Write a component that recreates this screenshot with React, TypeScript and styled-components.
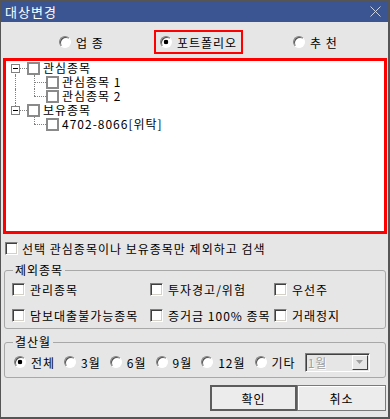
import React from 'react'
import styled, { createGlobalStyle } from 'styled-components'

const GlobalStyle = createGlobalStyle`
  html, body { margin: 0; padding: 0; background: #e6e6e6; }
  body {
    font-family: "Noto Sans CJK KR", "Liberation Sans", sans-serif;
    font-size: 12px;
    letter-spacing: 1px;
    color: #000;
  }
  * { box-sizing: border-box; }
`

const Window = styled.div`
  width: 390px;
  height: 419px;
  display: flex;
  flex-direction: column;
  background: #e6e6e6;
  border-style: solid;
  border-color: #555;
  border-width: 1px 2px 2px 1px;
`

const TitleBar = styled.div`
  height: 21px;
  display: flex;
  align-items: center;
  justify-content: space-between;
  padding: 0 7px 0 4px;
  background: #3b5593;
  color: #fff;
  font-size: 13px;
`

const Body = styled.div`
  display: flex;
  flex-direction: column;
  padding: 0 2px 0 3px;
`

const ModeRow = styled.div`
  height: 36px;
  padding: 4px 0 0 19px;
  display: grid;
  grid-template-columns: repeat(3, 117px);
  align-items: center;
  justify-items: center;
`

const ModeOption = styled.label<{ $highlight?: boolean }>`
  height: 24px;
  display: flex;
  align-items: center;
  gap: 5px;
  padding: 0 4px 0 4px;
  border: 2px solid ${p => (p.$highlight ? '#ff0000' : 'transparent')};
  white-space: pre;
`

const Radio = styled.span<{ $checked?: boolean }>`
  width: 12px;
  height: 12px;
  flex: none;
  border-radius: 50%;
  border: 1px solid;
  border-color: #808080 #fff #fff #808080;
  box-shadow: inset 1px 1px 0 #505050;
  background: ${p =>
    p.$checked ? 'radial-gradient(circle, #000 0 2px, #fff 2.6px)' : '#fff'};
`

const TreeBox = styled.div`
  margin: 0 -1px;
  height: 176px;
  border: 3px solid #ff0000;
  background: #fff;
  padding-top: 0;
`

const TreeRow = styled.div`
  height: 14px;
  display: flex;
  align-items: center;
`

const Branch = styled.span<{ $up?: boolean; $down?: boolean; $right?: boolean }>`
  position: relative;
  width: 19px;
  height: 14px;
  flex: none;
  display: flex;
  align-items: center;
  justify-content: center;
  &::before {
    content: '';
    display: ${p => (p.$up || p.$down ? 'block' : 'none')};
    position: absolute;
    left: 9px;
    top: ${p => (p.$up ? '0' : '7px')};
    bottom: ${p => (p.$down ? '0' : '7px')};
    border-left: 1px dotted #808080;
  }
  &::after {
    content: '';
    display: ${p => (p.$right ? 'block' : 'none')};
    position: absolute;
    left: 9px;
    right: -2px;
    top: 7px;
    border-top: 1px dotted #808080;
  }
`

const Expander = styled.span`
  position: relative;
  z-index: 1;
  width: 9px;
  height: 9px;
  margin-right: 1px;
  border: 1px solid #808080;
  background: #fff;
  display: flex;
  align-items: center;
  justify-content: center;
  &::before {
    content: '';
    width: 5px;
    height: 1px;
    background: #000;
  }
`

const TreeCheck = styled.span`
  width: 13px;
  height: 13px;
  flex: none;
  margin-left: 2px;
  border: 2px solid #8a8a8a;
  background: #fff;
`

const TreeLabel = styled.span`
  margin-left: 3px;
  height: 14px;
  line-height: 14px;
  white-space: nowrap;
`

const CheckBox = styled.span`
  width: 13px;
  height: 13px;
  flex: none;
  background: #fff;
  border: 1px solid;
  border-color: #808080 #fff #fff #808080;
  box-shadow: inset 1px 1px 0 #404040, inset -1px -1px 0 #d4d0c8;
`

const CheckItem = styled.label`
  height: 20px;
  display: flex;
  align-items: center;
  gap: 5px;
  white-space: nowrap;
`

const OnlyRow = styled(CheckItem)`
  margin-top: 4px;
  padding-left: 1px;
  gap: 4px;
`

const GroupBox = styled.fieldset<{ $top: number }>`
  margin: ${p => p.$top}px 0 0 0;
  padding: 0;
  min-width: 0;
  border: 1px solid #a8a8a8;
  border-radius: 3px;
`

const Legend = styled.legend`
  margin-left: 8px;
  padding: 0 2px;
  line-height: 14px;
  font-size: 12px;
`

const ExcludeGrid = styled.div`
  display: grid;
  grid-template-columns: 138px 124px 1fr;
  grid-auto-rows: 20px;
  row-gap: 6px;
  padding: 2px 0 3px 7px;
`

const MonthRow = styled.div`
  height: 20px;
  display: flex;
  align-items: center;
  gap: 9px;
  padding: 0 0 0 9px;
  margin: 3px 0 5px;
`

const MonthOption = styled.label`
  display: flex;
  align-items: center;
  gap: 5px;
  white-space: nowrap;
`

const Combo = styled.div`
  width: 65px;
  height: 19px;
  margin-left: 0;
  display: flex;
  align-items: stretch;
  border: 1px solid;
  border-color: #808080 #fff #fff #808080;
  box-shadow: inset 1px 1px 0 #404040;
  background: #e6e6e6;
`

const ComboText = styled.span`
  flex: 1;
  padding: 1px 0 0 2px;
  line-height: 15px;
  color: #a0a0a0;
  text-shadow: 1px 1px 0 #fff;
`

const ComboArrow = styled.span`
  width: 16px;
  margin: 1px 1px 1px 0;
  display: flex;
  align-items: center;
  justify-content: center;
  border: 1px solid;
  border-color: #fff #404040 #404040 #fff;
  background: #e6e6e6;
`

const ButtonRow = styled.div`
  margin-top: 7px;
  display: flex;
  justify-content: flex-end;
`

const Button = styled.button<{ $primary?: boolean; $width: number }>`
  width: ${p => p.$width}px;
  height: 26px;
  font-family: inherit;
  font-size: 12px;
  letter-spacing: 1px;
  color: #000;
  background: #ececec;
  border: ${p => (p.$primary ? '2px solid #5c5c5c' : '1px solid #7a7a7a')};
  box-shadow: ${p => (p.$primary ? 'none' : 'inset 1px 1px 0 #fff')};
  padding: 0;
`

const CloseIcon = () => (
  <svg width="11" height="11" viewBox="0 0 11 11">
    <path d="M0.5 0.5 L10.5 10.5 M10.5 0.5 L0.5 10.5" stroke="#c9d1e4" strokeWidth="1" />
  </svg>
)

const excludes = [
  '관리종목',
  '투자경고/위험',
  '우선주',
  '담보대출불가능종목',
  '증거금 100% 종목',
  '거래정지',
]

const months = ['전체', '3월', '6월', '9월', '12월', '기타']

export default function App() {
  return (
    <>
      <GlobalStyle />
      <Window>
        <TitleBar>
          <span>대상변경</span>
          <CloseIcon />
        </TitleBar>
        <Body>
          <ModeRow>
            <ModeOption>
              <Radio />
              업 종
            </ModeOption>
            <ModeOption $highlight>
              <Radio $checked />
              포트폴리오
            </ModeOption>
            <ModeOption>
              <Radio />
              추 천
            </ModeOption>
          </ModeRow>

          <TreeBox>
            <TreeRow>
              <Branch $down $right>
                <Expander />
              </Branch>
              <TreeCheck />
              <TreeLabel>관심종목</TreeLabel>
            </TreeRow>
            <TreeRow>
              <Branch $up $down />
              <Branch $up $down $right />
              <TreeCheck />
              <TreeLabel>관심종목 1</TreeLabel>
            </TreeRow>
            <TreeRow>
              <Branch $up $down />
              <Branch $up $right />
              <TreeCheck />
              <TreeLabel>관심종목 2</TreeLabel>
            </TreeRow>
            <TreeRow>
              <Branch $up $right>
                <Expander />
              </Branch>
              <TreeCheck />
              <TreeLabel>보유종목</TreeLabel>
            </TreeRow>
            <TreeRow>
              <Branch />
              <Branch $up $right />
              <TreeCheck />
              <TreeLabel>4702-8066[위탁]</TreeLabel>
            </TreeRow>
          </TreeBox>

          <OnlyRow>
            <CheckBox />
            선택 관심종목이나 보유종목만 제외하고 검색
          </OnlyRow>

          <GroupBox $top={5}>
            <Legend>제외종목</Legend>
            <ExcludeGrid>
              {excludes.map(name => (
                <CheckItem key={name}>
                  <CheckBox />
                  {name}
                </CheckItem>
              ))}
            </ExcludeGrid>
          </GroupBox>

          <GroupBox $top={6}>
            <Legend>결산월</Legend>
            <MonthRow>
              {months.map((m, i) => (
                <MonthOption key={m}>
                  <Radio $checked={i === 0} />
                  {m}
                </MonthOption>
              ))}
              <Combo>
                <ComboText>1월</ComboText>
                <ComboArrow>
                  <svg width="7" height="4" viewBox="0 0 7 4">
                    <path d="M0 0 H7 L3.5 4 Z" fill="#a0a0a0" />
                  </svg>
                </ComboArrow>
              </Combo>
            </MonthRow>
          </GroupBox>

          <ButtonRow>
            <Button $primary $width={87}>확인</Button>
            <Button $width={89}>취소</Button>
          </ButtonRow>
        </Body>
      </Window>
    </>
  )
}
